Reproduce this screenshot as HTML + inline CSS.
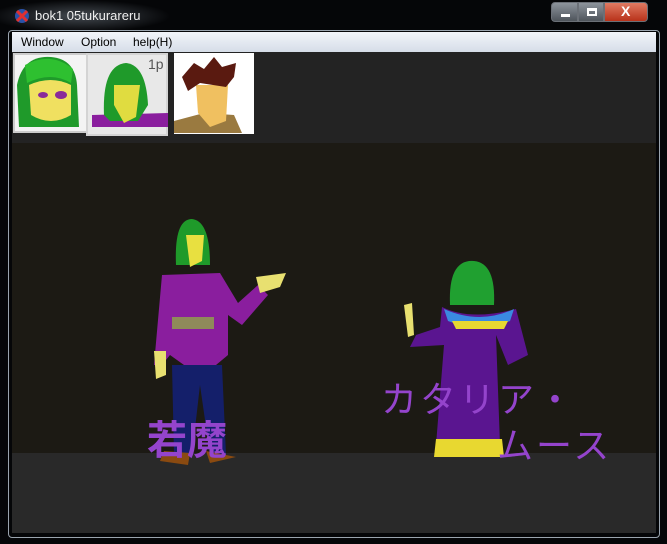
<!DOCTYPE html>
<html><head><meta charset="utf-8"><style>
*{margin:0;padding:0;box-sizing:border-box}
body{width:667px;height:544px;background:#050608;position:relative;overflow:hidden;font-family:"Liberation Sans","Noto Sans CJK JP",sans-serif}
.glow{position:absolute;left:0;top:0;width:200px;height:32px;background:radial-gradient(ellipse 90px 16px at 80px 16px,rgba(120,130,140,.55),rgba(0,0,0,0))}
.frame{position:absolute;left:8px;top:30px;width:652px;height:508px;border:1px solid #9aa4ae;border-radius:4px}
.title{position:absolute;left:35px;top:8px;font-size:13px;color:#eee}
.menu{position:absolute;left:12px;top:32px;width:644px;height:20px;background:linear-gradient(#f2f5fa,#d6dde8);font-size:12px;color:#000}
.menu span{position:absolute;top:3px}
.client{position:absolute;left:12px;top:52px;width:644px;height:481px;background:#232323}
.stage{position:absolute;left:12px;top:143px;width:644px;height:310px;background:#1c1a14}
.floor{position:absolute;left:12px;top:453px;width:644px;height:80px;background:#292929}
.btns{position:absolute;left:551px;top:2px;height:20px}
.b{position:absolute;top:0;height:20px;border:1px solid #6b7077;background:linear-gradient(#8d949c,#4e545b)}
.jp{position:absolute;color:#9444cc;font-size:40px;line-height:1}
</style></head><body>
<div class="glow"></div>
<div class="frame"></div>
<svg style="position:absolute;left:13px;top:7px" width="18" height="18"><circle cx="9" cy="9" r="7" fill="#2b52a8"/><path d="M4 4 L14 14 M14 4 L4 14" stroke="#e03030" stroke-width="3"/></svg>
<div class="title">bok1 05tukurareru</div>
<div class="btns">
<div class="b" style="left:0;width:27px;border-radius:4px 0 0 4px"><div style="position:absolute;left:9px;top:11px;width:9px;height:3px;background:#fff"></div></div>
<div class="b" style="left:27px;width:26px"><div style="position:absolute;left:8px;top:5px;width:10px;height:8px;border:2px solid #fff;border-top-width:3px"></div></div>
<div class="b" style="left:53px;width:44px;border-radius:0 4px 4px 0;background:linear-gradient(#e07a62,#b8321a)"><div style="position:absolute;left:16px;top:0;color:#fff;font-weight:bold;font-size:14px">X</div></div>
</div>
<div class="menu"><span style="left:9px">Window</span><span style="left:69px">Option</span><span style="left:121px">help(H)</span></div>
<div class="client"></div>
<!-- portraits -->
<div style="position:absolute;left:13px;top:53px;width:75px;height:80px;background:#f4f4f4;border:2px solid #ccc"></div>
<svg style="position:absolute;left:15px;top:55px" width="72" height="72"><path d="M4 72 L2 30 Q8 0 36 2 Q60 4 62 30 L64 72Z" fill="#1f9a2a"/><path d="M14 30 Q36 20 56 30 L56 60 Q36 72 16 60Z" fill="#f0e060"/><ellipse cx="46" cy="40" rx="6" ry="4" fill="#8a2a9a"/><ellipse cx="28" cy="40" rx="5" ry="3" fill="#8a2a9a"/><path d="M10 10 Q36 -4 58 14 L56 28 Q36 16 12 28Z" fill="#2ec030"/></svg>
<div style="position:absolute;left:86px;top:53px;width:82px;height:83px;background:#e8e8e8;border:2px solid #d4d4d4"></div>
<svg style="position:absolute;left:92px;top:55px" width="76" height="72"><path d="M0 72 L0 60 L76 58 L76 72Z" fill="#8a1e9e"/><path d="M12 60 Q10 10 34 8 Q54 10 56 50 L46 66 L18 66Z" fill="#1f9a2a"/><path d="M22 30 L48 30 L44 62 L32 68 L22 50Z" fill="#e0dc40"/><text x="56" y="14" font-size="14" fill="#555" font-family="Liberation Sans">1p</text></svg>
<div style="position:absolute;left:174px;top:53px;width:80px;height:81px;background:#fff"></div>
<svg style="position:absolute;left:174px;top:55px" width="80" height="78"><path d="M0 78 L0 66 L30 58 L60 60 L68 78Z" fill="#9a7a40"/><path d="M22 30 L54 30 L52 66 L36 72 L24 58Z" fill="#f0c060"/><path d="M8 22 L20 8 L30 14 L40 2 L48 12 L62 8 L60 22 L52 32 L26 28 L14 36Z" fill="#5a1a10"/></svg>
<div class="stage"></div>
<div class="floor"></div>
<!-- left character -->
<svg style="position:absolute;left:140px;top:215px" width="160" height="250">
<path d="M36 50 Q34 4 52 4 Q70 6 70 50Z" fill="#1f9a2a"/>
<path d="M46 20 L64 20 L62 46 L50 52Z" fill="#e8e040"/>
<path d="M22 60 L80 58 L98 88 L118 70 L128 80 L102 110 L88 100 L88 140 L76 150 L44 150 L30 140 L22 150 L14 150Z" fill="#8a1e9e"/>
<rect x="32" y="102" width="42" height="12" fill="#8f8a5a"/>
<path d="M32 150 L82 150 L86 240 L70 240 L60 170 L52 240 L34 240Z" fill="#141f6a"/>
<path d="M116 62 L146 58 L140 72 L120 78Z" fill="#e8e070"/>
<path d="M14 136 L26 136 L26 160 L16 164Z" fill="#e8e070"/>
<path d="M66 236 L96 242 L70 248Z M24 236 L50 238 L48 250 L20 246Z" fill="#8a4a10"/>
</svg>
<!-- right character -->
<svg style="position:absolute;left:400px;top:255px" width="130" height="210">
<path d="M50 50 Q48 4 74 6 Q96 8 94 50Z" fill="#20a030"/>
<path d="M42 52 Q70 66 116 54 L128 100 L108 110 L96 80 L100 190 L36 190 L44 90 L10 92 L16 80 L40 72Z" fill="#5a1590"/>
<path d="M44 54 Q80 70 114 54 L110 66 Q78 78 48 66Z" fill="#3a8ae0"/>
<path d="M52 66 L108 66 L104 74 L56 74Z" fill="#e8d830"/>
<path d="M36 184 L102 184 L104 202 L34 202Z" fill="#e8d830"/>
<path d="M4 50 L12 48 L14 80 L8 82Z" fill="#e8e070"/>
</svg>
<div class="jp" style="left:147px;top:421px;font-weight:bold">若魔</div>
<div class="jp" style="left:381px;top:382px;font-size:36px;letter-spacing:3px">カタリア・</div>
<div class="jp" style="left:497px;top:428px;font-size:36px;letter-spacing:3px">ムース</div>
</body></html>
